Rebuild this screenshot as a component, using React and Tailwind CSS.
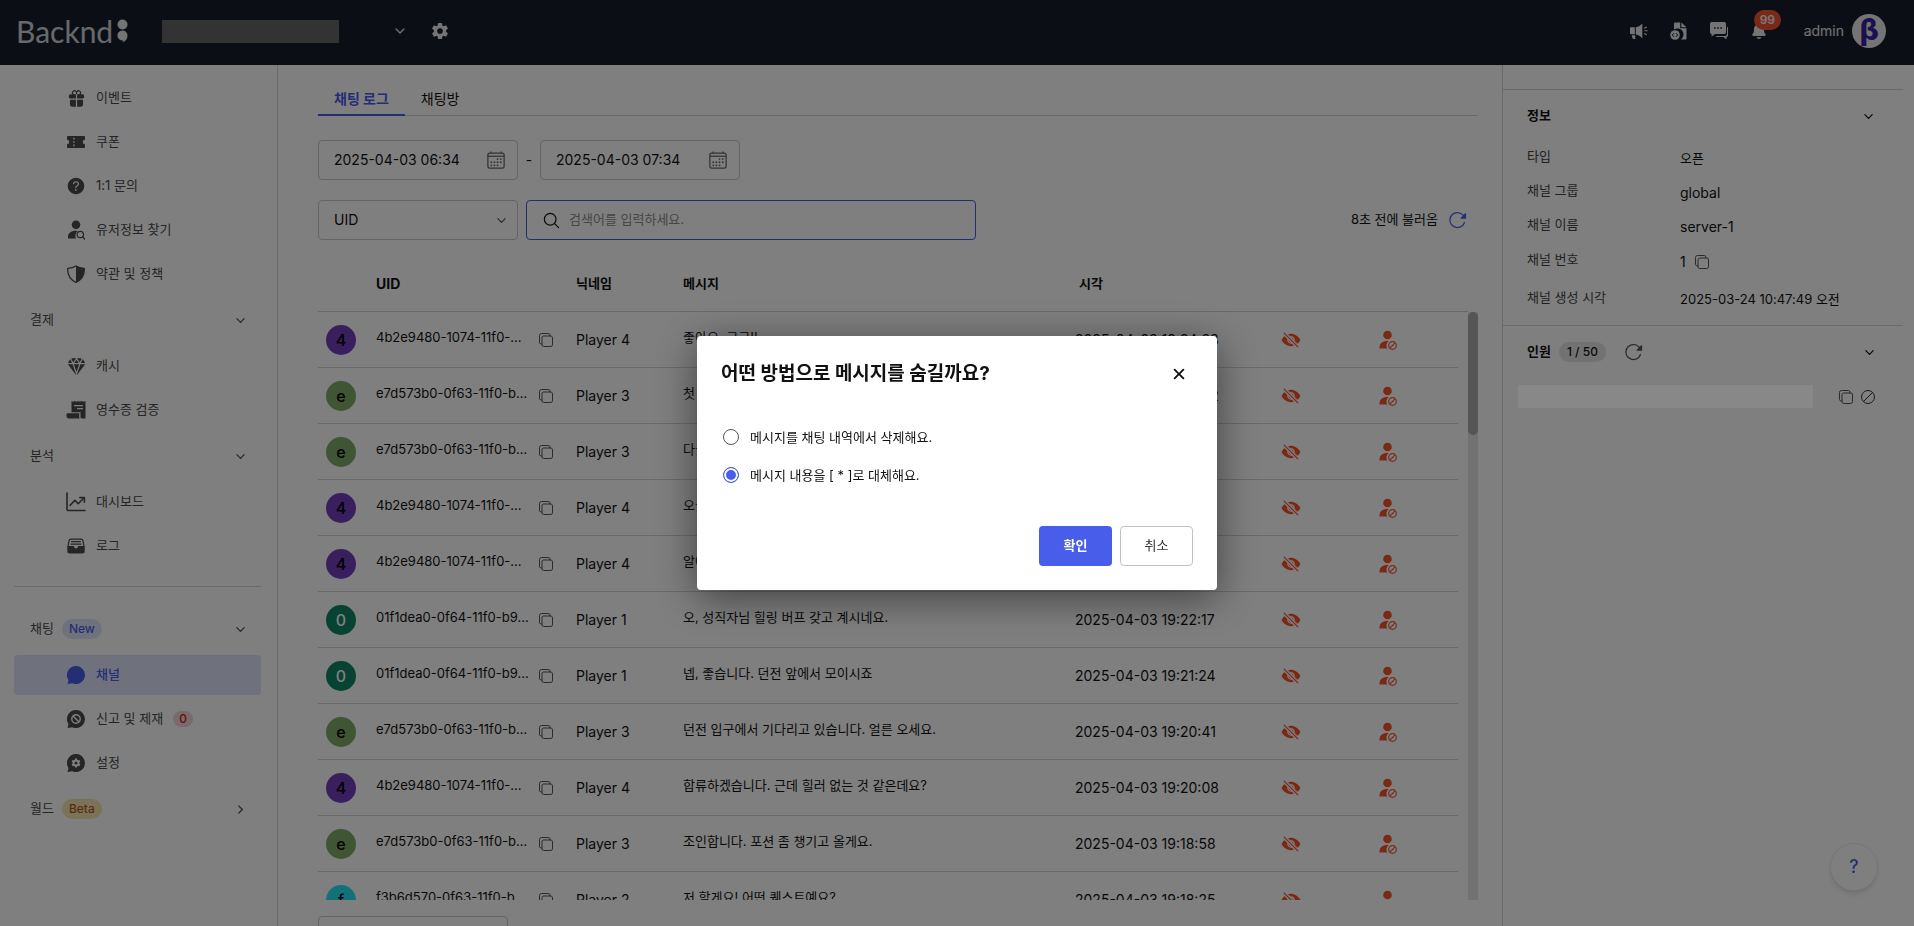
import React, { useState } from "react";
import {
  IoBanOutline,
  IoCalendarOutline,
  IoChevronDown,
  IoChevronForward,
  IoClose,
  IoCopyOutline,
  IoDiamond,
  IoEyeOff,
  IoFileTrayFull,
  IoGift,
  IoHelpCircle,
  IoNotifications,
  IoReloadOutline,
  IoSearchOutline,
  IoSettingsSharp,
} from "react-icons/io5";

const TicketIcon = () => (
  <svg width="18" height="18" viewBox="0 0 18 18" fill="currentColor">
    <path
      fillRule="evenodd"
      d="M1 3h16a1 1 0 0 1 1 1v2.8a2.2 2.2 0 0 0 0 4.4V14a1 1 0 0 1-1 1H1a1 1 0 0 1-1-1v-2.8a2.2 2.2 0 0 0 0-4.4V4a1 1 0 0 1 1-1Zm5.2 1.8v1.6h1.4V4.8H6.2Zm0 3.4v1.6h1.4V8.2H6.2Zm0 3.4v1.6h1.4v-1.6H6.2Z"
    />
  </svg>
);

const ShieldIcon = () => (
  <svg width="18" height="18" viewBox="0 0 18 18">
    <path
      d="M9 1c2 1.3 5 2.2 8.3 2.4C17.6 9.5 15 14.5 9 17.3 3 14.5.4 9.5.7 3.4 4 3.2 7 2.300 9 1Z"
      fill="none"
      stroke="currentColor"
      strokeWidth="1.3"
      strokeLinejoin="round"
    />
    <path d="M9 1c2 1.3 5 2.2 8.3 2.4C17.6 9.5 15 14.5 9 17.3V1Z" fill="currentColor" />
  </svg>
);

const ReceiptIcon = () => (
  <svg width="20" height="18" viewBox="0 0 20 18" fill="currentColor">
    <path
      fillRule="evenodd"
      d="M5.5 0l1.6.7L8.8 0l1.7.7 1.7-.7 1.7.7 1.7-.7 1.7.7L19.5 0v17.5h-3.7c-.9 0-1.3-.8-1.3-1.7v-4.6h-9V0ZM8 4v1.3h9V4H8Zm3 3v1.3h6V7h-6Z"
    />
    <path d="M1.5 12.2h11.7v3.6c0 .7.1 1.3.5 1.7H3C1.3 17.5.5 16.4.5 15v-1.800a1 1 0 0 1 1-1Z" />
  </svg>
);

const ChartIcon = () => (
  <svg width="20" height="20" viewBox="0 0 20 20" fill="none" stroke="currentColor" strokeWidth="1.6" strokeLinecap="round" strokeLinejoin="round">
    <path d="M1 1v16.500a1 1 0 0 0 1 1h17" />
    <path d="M4 13.500l4.800-5.200 3.400 3.400L18 6" />
    <path d="M13.800 5.600h4.600v4.600" />
  </svg>
);

const UserSearchIcon = () => (
  <svg width="18" height="20" viewBox="0 0 18 20" fill="currentColor">
    <circle cx="9" cy="4.800" r="4.300" />
    <path d="M1 18.500v-1.800c0-3.600 3.200-6 7.300-6 .9 0 1.700.1 2.500.3a5.500 5.500 0 0 0-1.600 7.500H1Z" />
    <circle cx="13.300" cy="14.500" r="3.200" fill="none" stroke="currentColor" strokeWidth="1.200" />
    <path d="M15.600 16.800l2 2.200" stroke="currentColor" strokeWidth="1.300" strokeLinecap="round" />
  </svg>
);

const UserBanIcon = () => (
  <svg width="18" height="20" viewBox="0 0 18 20" fill="currentColor">
    <circle cx="8.500" cy="5" r="4.300" />
    <path d="M.500 18.500v-1.600c0-3.500 3.100-6 7.500-6 .6 0 1.200 0 1.700.1a5.600 5.600 0 0 0-1.300 7.500H.500Z" />
    <circle cx="13.500" cy="15.500" r="3.800" fill="none" stroke="currentColor" strokeWidth="1.200" />
    <path d="M16.200 12.800l-5.400 5.400" stroke="currentColor" strokeWidth="1.200" />
  </svg>
);

const BubbleIcon = ({ children }) => (
  <svg width="18" height="18" viewBox="0 0 18 18">
    <path d="M9 0a9 9 0 1 1-3.800 17.200L1 18c-.3 0-.4-.2-.3-.5L1.500 14A9 9 0 0 1 9 0Z" fill="currentColor" />
    {children}
  </svg>
);

const BubbleBanIcon = () => (
  <BubbleIcon>
    <circle cx="9" cy="9" r="4.200" fill="none" stroke="#fff" strokeWidth="1.400" />
    <path d="M6 6l6 6" stroke="#fff" strokeWidth="1.400" />
  </BubbleIcon>
);

const BubbleGearIcon = () => (
  <BubbleIcon>
    <circle cx="9" cy="9" r="2.500" fill="none" stroke="#fff" strokeWidth="2" />
    <path d="M9 4.500v9M5.100 6.800l7.800 4.500M5.100 11.300l7.800-4.500" stroke="#fff" strokeWidth="2" />
    <circle cx="9" cy="9" r="1.500" fill="currentColor" />
  </BubbleIcon>
);

const MegaphoneIcon = () => (
  <svg width="18" height="18" viewBox="0 0 18 18" fill="currentColor">
    <path d="M1 5.300h3.800v7H1a1 1 0 0 1-1-1v-5a1 1 0 0 1 1-1ZM5.800 5.200C8.500 4.700 10.700 3.500 12.300 1.500v14.700C10.700 14.200 8.500 12.900 5.800 12.400V5.200ZM1.800 13.200h3.400v3.700H3.600a1.300 1.300 0 0 1-1.200-.9l-.6-2.800Z" />
    <path d="M14.200 6.200l2.600-1.300M14.400 8.800h3.200M14.200 11.400l2.600 1.300" stroke="currentColor" strokeWidth="1.100" />
  </svg>
);

const FileCodeIcon = () => (
  <svg width="18" height="18" viewBox="0 0 18 18">
    <path
      d="M5 .5h5.200v5.800H16.500v10.200a1 1 0 0 1-1 1h-4.600a6 6 0 0 0-6.900-10V1.500a1 1 0 0 1 1-1Z"
      fill="currentColor"
    />
    <path d="M11.400.5l5.100 4.700h-5.100V.5Z" fill="currentColor" />
    <circle cx="5" cy="13" r="4.800" fill="currentColor" />
    <path d="M4 11.200L2.300 13 4 14.800M6 11.200L7.700 13 6 14.800" fill="none" stroke="#181d2c" strokeWidth="1" />
  </svg>
);

const CommentsIcon = () => (
  <svg width="18" height="18" viewBox="0 0 18 18" fill="currentColor">
    <path
      fillRule="evenodd"
      d="M1.800 0h12.400A1.800 1.800 0 0 1 16 1.800v8.400a1.800 1.800 0 0 1-1.800 1.800H5l-2.800 2.200A.500.500 0 0 1 1.500 14v-2A1.800 1.800 0 0 1 0 10.200V1.800A1.800 1.800 0 0 1 1.800 0ZM4 5.200v1.600h1.600V5.200H4Zm3.200 0v1.600h1.600V5.200H7.200Zm3.200 0v1.600H12V5.200h-1.600Z"
    />
    <path d="M17 4.500c.6.300 1 .9 1 1.600v7.100c0 .9-.6 1.600-1.500 1.800V17.500l-3.200-2.500H7.200a1.800 1.800 0 0 1-1.600-1h9.200A2.200 2.200 0 0 0 17 11.800V4.500Z" />
  </svg>
);

const menu = [
  {
    items: [
      { label: "이벤트", icon: <IoGift size={19} /> },
      { label: "쿠폰", icon: <TicketIcon /> },
      { label: "1:1 문의", icon: <IoHelpCircle size={22} className="shrink-0" /> },
      { label: "유저정보 찾기", icon: <UserSearchIcon /> },
      { label: "약관 및 정책", icon: <ShieldIcon /> },
    ],
  },
  {
    title: "결제",
    items: [
      { label: "캐시", icon: <IoDiamond size={19} /> },
      { label: "영수증 검증", icon: <ReceiptIcon /> },
    ],
  },
  {
    title: "분석",
    items: [
      { label: "대시보드", icon: <ChartIcon /> },
      { label: "로그", icon: <IoFileTrayFull size={20} /> },
    ],
  },
  {
    title: "채팅",
    divider: true,
    badge: "New",
    badgeClass: "bg-[#dfe4fa] text-[#495deb]",
    items: [
      { label: "채널", icon: <BubbleIcon />, active: true },
      { label: "신고 및 제재", icon: <BubbleBanIcon />, count: 0 },
      { label: "설정", icon: <BubbleGearIcon /> },
    ],
  },
  {
    title: "월드",
    badge: "Beta",
    badgeClass: "bg-[#f5e5b3] text-[#b35f10]",
    closed: true,
    items: [],
  },
];

const users = {
  4: { uid: "4b2e9480-1074-11f0-...", color: "bg-[#753fbf] text-black" },
  3: { uid: "e7d573b0-0f63-11f0-b...", color: "bg-[#80ab68] text-black" },
  2: { uid: "f3b6d570-0f63-11f0-b...", color: "bg-[#26e4f2] text-black" },
  1: { uid: "01f1dea0-0f64-11f0-b9...", color: "bg-[#0f8665] text-white" },
};

const logs = [
  { player: 4, message: "좋아요, 고고!!", time: "2025-04-03 19:24:33" },
  { player: 3, message: "첫 던전이라 조금 떨리네요.", time: "2025-04-03 19:24:02" },
  { player: 3, message: "다들 준비되셨나요?", time: "2025-04-03 19:23:41" },
  { player: 4, message: "오늘도 잘 부탁드려요.", time: "2025-04-03 19:23:11" },
  { player: 4, message: "알아요. 바로 갈게요.", time: "2025-04-03 19:22:41" },
  { player: 1, message: "오, 성직자님 힐링 버프 갖고 계시네요.", time: "2025-04-03 19:22:17" },
  { player: 1, message: "넵, 좋습니다. 던전 앞에서 모이시죠", time: "2025-04-03 19:21:24" },
  { player: 3, message: "던전 입구에서 기다리고 있습니다. 얼른 오세요.", time: "2025-04-03 19:20:41" },
  { player: 4, message: "합류하겠습니다. 근데 힐러 없는 것 같은데요?", time: "2025-04-03 19:20:08" },
  { player: 3, message: "조인합니다. 포션 좀 챙기고 올게요.", time: "2025-04-03 19:18:58" },
  { player: 2, message: "저 할게요! 어떤 퀘스트예요?", time: "2025-04-03 19:18:25" },
];

const Header = () => {
  return (
    <header className="flex h-[65px] shrink-0 items-center bg-[#181d2c] pr-7 pb-[3px] pl-4 text-white/90">
      <a href="#" className="flex w-[146px] items-center gap-1">
        <span className="font-[Lato] text-[30px] leading-8 text-white/80">Backnd</span>
        <svg width="11" height="24" viewBox="0 0 11 24" fill="currentColor">
          <circle cx="5.500" cy="5.500" r="5" />
          <path d="M5.500 11.500a5 5 0 0 1 5 5c0 3.500-2 6-5.500 7.200.9-.9 1.300-1.600 1.400-2.300A5 5 0 1 1 5.500 11.500Z" />
        </svg>
      </a>
      <div className="h-[23px] w-[177px] bg-[#666]" />
      <button aria-label="프로젝트 선택" className="ml-[54px]">
        <IoChevronDown size={14} />
      </button>
      <button aria-label="프로젝트 설정" className="ml-6">
        <IoSettingsSharp size={18} />
      </button>
      <div className="ml-auto flex items-center gap-[22px]">
        <button aria-label="공지">
          <MegaphoneIcon />
        </button>
        <button aria-label="문서">
          <FileCodeIcon />
        </button>
        <button aria-label="문의">
          <CommentsIcon />
        </button>
        <button aria-label="알림" className="relative">
          <IoNotifications size={18} />
          <span className="absolute -top-3 left-1 rounded-full bg-[#f0522f] px-1.5 text-[12px] leading-5 font-semibold">
            99
          </span>
        </button>
      </div>
      <span className="ml-9 text-sm">admin</span>
      <div className="ml-2 flex h-[34px] w-[34px] items-center justify-center rounded-full bg-white/90 font-['DejaVu_Sans'] text-[28px] leading-8 font-bold text-[#38209c]">
        β
      </div>
    </header>
  );
};

const Sidebar = () => {
  return (
    <nav className="flex w-[278px] shrink-0 flex-col gap-1 border-r border-[#d2d2d2] pt-[13px] pr-4 pl-3.5 text-[13px] text-[#4a4a4a]">
      {menu.map((group, i) => (
        <React.Fragment key={i}>
          {group.divider && <hr className="my-4 border-[#d6d6d6]" />}
          {group.title && (
            <button className="flex h-11 items-center gap-2 pr-3.5 pl-4">
              {group.title}
              {group.badge && (
                <span className={`rounded-full px-[7px] text-[12px] leading-5 font-medium ${group.badgeClass}`}>
                  {group.badge}
                </span>
              )}
              {group.closed ? (
                <IoChevronForward size={13} className="ml-auto" />
              ) : (
                <IoChevronDown size={13} className="ml-auto" />
              )}
            </button>
          )}
          {group.items.map((item) => (
            <a
              key={item.label}
              href="#"
              className={`flex h-10 items-center gap-2.5 rounded pl-[52px] ${
                item.active ? "bg-[#dfe4fa] font-medium text-[#495deb]" : ""
              }`}
            >
              <span className="flex w-5 justify-center">{item.icon}</span>
              {item.label}
              {item.count !== undefined && (
                <span className="rounded-full bg-[#f2d6d6] px-1.5 text-[12px] leading-4 font-medium text-[#c92020]">
                  {item.count}
                </span>
              )}
            </a>
          ))}
        </React.Fragment>
      ))}
    </nav>
  );
};

const DateInput = ({ label, value }) => {
  return (
    <label className="flex h-10 w-[200px] items-center justify-between rounded border border-[#c8c8c8] pr-[11px] pl-[15px]">
      <input aria-label={label} defaultValue={value} className="w-[140px] text-sm outline-none" />
      <IoCalendarOutline size={20} className="text-[#666]" />
    </label>
  );
};

const ChatLog = () => {
  return (
    <main className="flex min-w-0 flex-1 flex-col overflow-hidden pr-6 pl-10">
      <div className="flex h-[51px] shrink-0 items-end border-b border-[#d2d2d2] text-sm">
        <button className="-mb-px h-9 border-b-2 border-[#495deb] px-4 pt-1 font-bold text-[#495deb]">
          채팅 로그
        </button>
        <button className="-mb-px h-9 px-4 pt-0.5">채팅방</button>
      </div>

      <div className="mt-6 flex shrink-0 items-center">
        <DateInput label="시작 시각" value="2025-04-03 06:34" />
        <span className="w-[22px] text-center text-sm">-</span>
        <DateInput label="종료 시각" value="2025-04-03 07:34" />
      </div>

      <div className="mt-5 flex shrink-0 items-center gap-2">
        <div className="relative">
          <select
            aria-label="검색 조건"
            className="h-10 w-[200px] appearance-none rounded border border-[#c8c8c8] px-[15px] text-sm"
          >
            <option>UID</option>
          </select>
          <IoChevronDown size={13} className="pointer-events-none absolute top-3.5 right-2.5 text-[#555]" />
        </div>
        <label className="flex h-10 w-[450px] items-center gap-2 rounded border border-[#495deb] px-[15px]">
          <IoSearchOutline size={19} />
          <input
            aria-label="검색어"
            placeholder="검색어를 입력하세요."
            className="flex-1 text-[13px] outline-none placeholder:text-[#8c8c8c]"
          />
        </label>
        <button className="mr-2.5 ml-auto flex items-center gap-2.5 text-[13px]">
          8초 전에 불러옴
          <IoReloadOutline size={20} className="text-[#495deb]" />
        </button>
      </div>

      <div className="mt-4 flex min-h-0 flex-1">
        <div className="min-w-0 flex-1 overflow-hidden">
          <table className="w-full table-fixed border-separate border-spacing-0 text-left text-sm whitespace-nowrap">
            <thead>
              <tr className="h-14 *:border-b *:border-[#d2d2d2] *:p-0">
                <th className="w-[58px]" />
                <th className="w-[200px]">UID</th>
                <th className="w-[107px] text-[13px]">닉네임</th>
                <th className="text-[13px]">메시지</th>
                <th className="w-[206px] text-[13px]">
                  <span className="pl-1">시각</span>
                </th>
                <th className="w-[98px]" />
                <th className="w-[79px]" />
                <th className="w-2.5" />
              </tr>
            </thead>
            <tbody>
              {logs.map((log) => (
                <tr key={log.time} className="h-14 *:border-[#d2d2d2] *:p-0 *:not-last:border-b">
                  <td>
                    <div
                      className={`ml-2 flex h-[30px] w-[30px] items-center justify-center rounded-full text-base font-medium ${users[log.player].color}`}
                    >
                      {users[log.player].uid[0]}
                    </div>
                  </td>
                  <td>
                    <div className="flex items-center">
                      <span className="w-[162px] pb-1 text-[13px]">{users[log.player].uid}</span>
                      <button aria-label="복사">
                        <IoCopyOutline size={16} className="text-[#555]" />
                      </button>
                    </div>
                  </td>
                  <td>Player {log.player}</td>
                  <td className="text-[13px]">
                    <div className="pb-1">{log.message}</div>
                  </td>
                  <td>{log.time}</td>
                  <td>
                    <button aria-label="메시지 숨기기" className="block">
                      <IoEyeOff size={20} className="text-[#f5532f]" />
                    </button>
                  </td>
                  <td>
                    <button aria-label="유저 제재" className="block text-[#f5532f]">
                      <UserBanIcon />
                    </button>
                  </td>
                  <td />
                </tr>
              ))}
            </tbody>
          </table>
        </div>
        <div className="mt-14 w-2.5 bg-[#e4e4e4]">
          <div className="h-[123px] rounded-full bg-[#aaa]" />
        </div>
      </div>

      <div className="h-[26px] shrink-0 pt-4">
        <select aria-label="페이지 크기" className="h-10 w-[190px] appearance-none rounded border border-[#c8c8c8]" />
      </div>
    </main>
  );
};

const InfoPanel = () => {
  return (
    <aside className="w-[412px] shrink-0 border-l border-[#d2d2d2] pt-6 pr-[11px] text-[13px]">
      <section className="border-t border-[#d2d2d2] pr-7 pb-[5px] pl-6">
        <div className="flex h-[52px] items-center justify-between font-bold">
          <h2>정보</h2>
          <IoChevronDown size={13} />
        </div>
        <dl className="grid grid-cols-[153px_1fr] grid-rows-[34px_34px_34px_36px_40px] items-center *:odd:pb-1 *:odd:text-[#444]">
          <dt>타입</dt>
          <dd>오픈</dd>
          <dt>채널 그룹</dt>
          <dd className="text-sm">global</dd>
          <dt>채널 이름</dt>
          <dd className="text-sm">server-1</dd>
          <dt>채널 번호</dt>
          <dd className="flex items-center gap-2 text-sm">
            1
            <button aria-label="복사">
              <IoCopyOutline size={16} className="text-[#555]" />
            </button>
          </dd>
          <dt>채널 생성 시각</dt>
          <dd>2025-03-24 10:47:49 오전</dd>
        </dl>
      </section>
      <section className="border-t border-[#d2d2d2] pr-[27px] pl-[15px]">
        <div className="flex h-[52px] items-center pl-[9px]">
          <h2 className="font-bold">인원</h2>
          <span className="ml-2 rounded-full bg-[#e4e4e4] px-2 text-[12px] leading-5 font-medium">1 / 50</span>
          <button aria-label="새로고침" className="ml-[18px]">
            <IoReloadOutline size={20} className="text-[#555]" />
          </button>
          <IoChevronDown size={13} className="ml-auto" />
        </div>
        <div className="flex items-center gap-1.5 pt-[7px]">
          <div className="relative z-50 h-[23px] w-[295px] bg-[#888]" />
          <button aria-label="복사" className="ml-auto">
            <IoCopyOutline size={16} className="text-[#555]" />
          </button>
          <button aria-label="제재" className="-scale-x-100">
            <IoBanOutline size={16} className="text-[#333]" />
          </button>
        </div>
      </section>
    </aside>
  );
};

const HideMessageModal = () => {
  const [method, setMethod] = useState("mask");
  const options = [
    { value: "delete", label: "메시지를 채팅 내역에서 삭제해요." },
    { value: "mask", label: "메시지 내용을 [ * ]로 대체해요." },
  ];

  return (
    <div className="fixed inset-0 z-40 flex items-center justify-center bg-black/50">
      <div role="dialog" aria-modal="true" className="w-[520px] rounded bg-white p-6 shadow-[0_8px_40px_rgba(0,0,0,0.5)]">
        <div className="flex items-center justify-between">
          <h1 className="text-[19px] leading-7 font-bold">어떤 방법으로 메시지를 숨길까요?</h1>
          <button aria-label="닫기" className="mr-1">
            <IoClose size={20} />
          </button>
        </div>
        <div className="mt-[38px] flex flex-col gap-4">
          {options.map((option) => (
            <label key={option.value} className="flex items-center gap-[11px] pl-0.5 text-[13px] leading-[22px]">
              <input
                type="radio"
                name="method"
                checked={method === option.value}
                onChange={() => setMethod(option.value)}
                className="h-4 w-4 appearance-none rounded-full border border-[#555] bg-white checked:border-[#495deb] checked:bg-[#495deb] checked:shadow-[inset_0_0_0_2px_#fff]"
              />
              {option.label}
            </label>
          ))}
        </div>
        <div className="mt-10 flex justify-end gap-2 text-[13px]">
          <button className="h-10 w-[73px] rounded bg-[#495deb] font-bold text-white">확인</button>
          <button className="h-10 w-[73px] rounded border border-[#c2c2c2] text-[#333]">취소</button>
        </div>
      </div>
    </div>
  );
};

const App = () => {
  return (
    <div className="flex h-screen flex-col overflow-hidden bg-white font-[Inter,'Noto_Sans_CJK_KR',sans-serif] text-[#111]">
      <Header />
      <div className="flex min-h-0 flex-1">
        <Sidebar />
        <ChatLog />
        <InfoPanel />
      </div>
      <button
        aria-label="도움말"
        className="fixed right-9 bottom-[35px] h-12 w-12 rounded-full border border-[#ececec] bg-white text-lg font-medium text-[#495deb] shadow-md"
      >
        ?
      </button>
      <HideMessageModal />
    </div>
  );
};

export default App;
